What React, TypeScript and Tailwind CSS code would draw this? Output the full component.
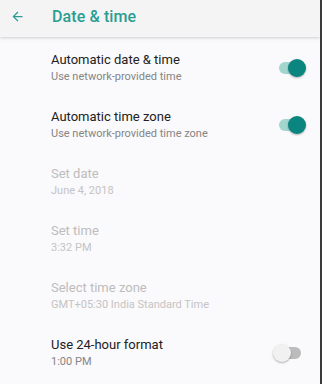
import React from 'react';

type Row = {
  title: string;
  summary: string;
  disabled?: boolean;
  toggle?: boolean;
};

const rows: Row[] = [
  { title: 'Automatic date & time', summary: 'Use network-provided time', toggle: true },
  { title: 'Automatic time zone', summary: 'Use network-provided time zone', toggle: true },
  { title: 'Set date', summary: 'June 4, 2018', disabled: true },
  { title: 'Set time', summary: '3:32 PM', disabled: true },
  { title: 'Select time zone', summary: 'GMT+05:30 India Standard Time', disabled: true },
  { title: 'Use 24-hour format', summary: '1:00 PM', toggle: false },
];

function Switch({ on }: { on: boolean }) {
  return (
    <div className="relative w-[22px] h-[18px] flex items-center">
      <div
        className={`w-[22px] h-[12px] rounded-full ${on ? 'bg-[#a3d5cf]' : 'bg-[#bcbcbc]'}`}
      />
      <div
        className={`absolute top-0 w-[18px] h-[18px] rounded-full shadow-[0_1px_2px_rgba(0,0,0,0.3)] ${
          on ? 'right-[-5px] bg-[#0a8580]' : 'left-[-6px] bg-[#f1f1f1]'
        }`}
      />
    </div>
  );
}

export default function App() {
  return (
    <div
      className="w-[322px] h-[384px] bg-[#faf9fb] overflow-hidden flex flex-col border-r-2 border-[#3a3a3a]"
      style={{ fontFamily: 'Roboto, "Noto Sans", sans-serif' }}
    >
      <div className="h-[37px] shrink-0 bg-[#f4f4f4] flex items-center pb-[4px] shadow-[0_1px_3px_rgba(0,0,0,0.18)] z-10">
        <svg className="ml-[10px] w-[15px] h-[15px]" viewBox="0 0 24 24" fill="#2a9d93">
          <path d="M20 11H7.83l5.59-5.59L12 4l-8 8 8 8 1.41-1.41L7.83 13H20v-2z" />
        </svg>
        <span className="ml-[27px] text-[16px] font-medium text-[#2a9d93] tracking-[0.1px]">
          Date &amp; time
        </span>
      </div>
      <div className="flex flex-col pt-[2px]">
        {rows.map((r) => (
          <div key={r.title} className="h-[57px] flex items-center pl-[51px] pr-[19px]">
            <div className="flex-1 flex flex-col">
              <span
                className={`text-[13px] leading-[17px] ${r.disabled ? 'text-[#bdbdbd]' : 'text-[#212121]'}`}
              >
                {r.title}
              </span>
              <span
                className={`text-[11px] leading-[15px] mt-[1px] ${r.disabled ? 'text-[#c4c4c4]' : 'text-[#858585]'}`}
              >
                {r.summary}
              </span>
            </div>
            {r.toggle !== undefined && <Switch on={r.toggle} />}
          </div>
        ))}
      </div>
    </div>
  );
}
